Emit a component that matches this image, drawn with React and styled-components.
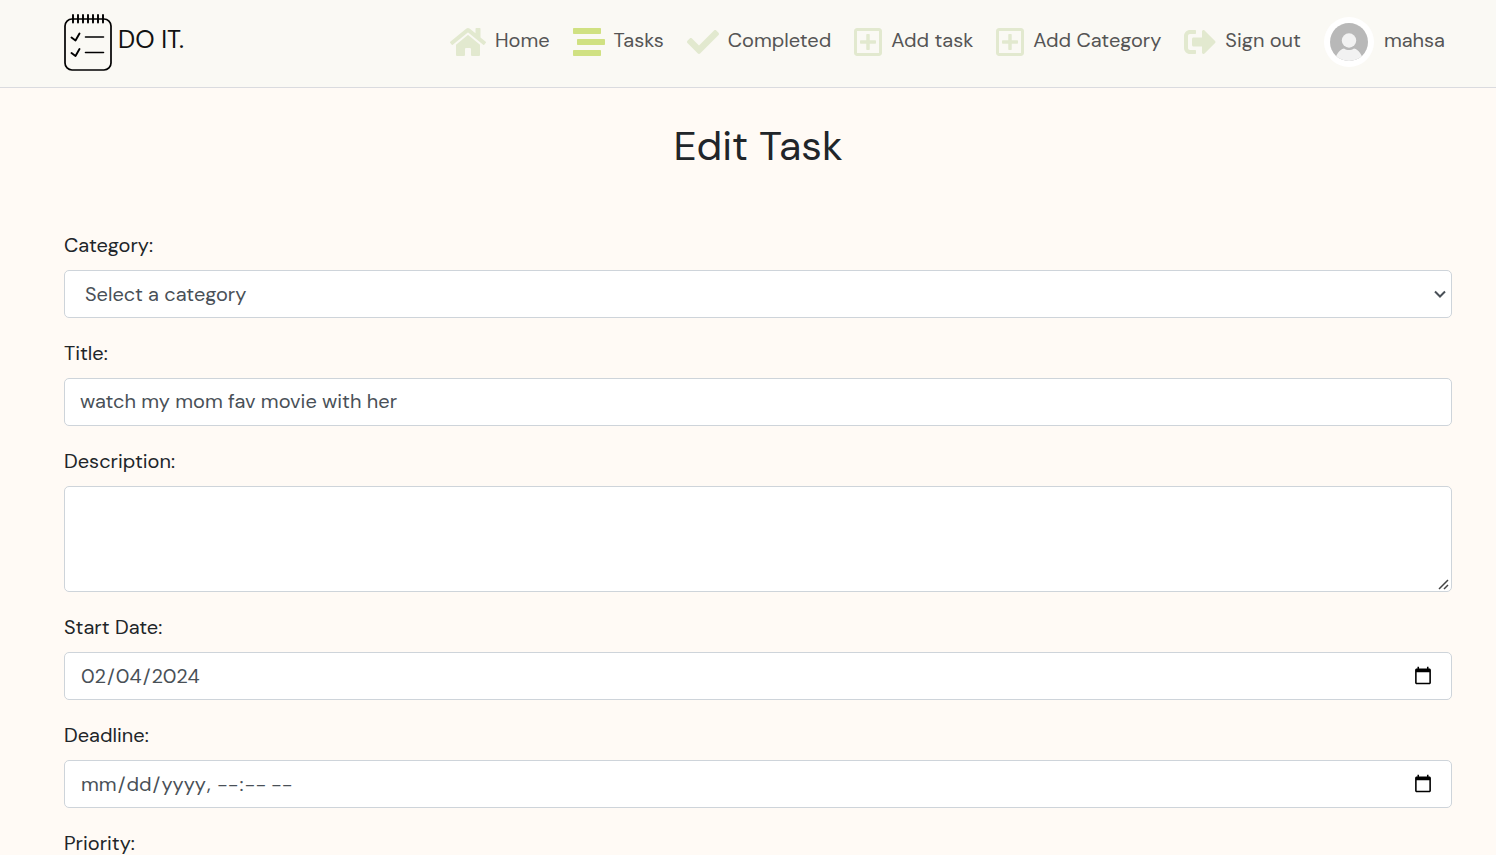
import React from "react";
import styled, { createGlobalStyle } from "styled-components";
import { FaHome, FaStream, FaCheck, FaRegPlusSquare, FaSignOutAlt } from "react-icons/fa";

const GlobalStyle = createGlobalStyle`
  *, *::before, *::after { box-sizing: border-box; }
  body {
    margin: 0;
    background: #fffaf5;
    color: #212529;
    font-family: "DM Sans", Inter, "Liberation Sans", sans-serif;
    font-size: 20px;
    line-height: 30px;
  }
`;

const Header = styled.header`
  display: flex;
  align-items: center;
  justify-content: space-between;
  height: 88px;
  padding: 0 44px 0 64px;
  background: #faf9f4;
  border-bottom: 1px solid #dadbdf;
`;

const Brand = styled.a`
  display: flex;
  align-items: center;
  gap: 6px;
  color: #111;
  font-size: 25px;
  text-decoration: none;
  padding-bottom: 8px;
`;

const BrandMark = styled.svg`
  width: 48px;
  height: 58px;
  margin-top: 6px;
`;

const Nav = styled.nav`
  display: flex;
  align-items: center;
  gap: 23px;
  padding: 0 7px 8px 0;
`;

const NavLink = styled.a`
  display: flex;
  align-items: center;
  gap: 9px;
  color: #555;
  text-decoration: none;
  white-space: nowrap;

  svg {
    flex: none;
    width: ${(p) => p.$iconWidth}px;
    height: 32px;
    margin-top: 5px;
    color: ${(p) => (p.$active ? "#d0e182" : "#e2e9cf")};
  }
`;

const Profile = styled.a`
  display: flex;
  align-items: center;
  gap: 10px;
  color: #555;
  text-decoration: none;
`;

const Avatar = styled.svg`
  width: 50px;
  height: 50px;
  margin-top: 5px;
`;

const Main = styled.main`
  padding: 34px 44px 0 64px;
`;

const Title = styled.h1`
  margin: 0 0 60px;
  font-size: 41px;
  font-weight: 400;
  line-height: 48px;
  text-align: center;
`;

const Form = styled.form`
  display: flex;
  flex-direction: column;
  gap: 20px;
`;

const Field = styled.div`
  display: flex;
  flex-direction: column;
  gap: 10px;
`;

const Input = styled.input`
  width: 100%;
  height: 48px;
  margin: 0;
  padding: 6px 15px 8px;
  border: 1px solid #ced4da;
  border-radius: 5px;
  background: #fff;
  color: #495057;
  font: inherit;
`;

const DateInput = styled(Input)`
  padding: 7px 16px 7px 15px;
`;

const SelectBox = styled.div`
  display: grid;
  align-items: center;

  > * { grid-area: 1 / 1; }

  svg {
    justify-self: end;
    width: 12px;
    height: 8px;
    margin-right: 6px;
    pointer-events: none;
  }
`;

const Select = styled(Input).attrs({ as: "select" })`
  appearance: none;
  padding: 7px 24px 7px 20px;
`;

const TextArea = styled(Input).attrs({ as: "textarea" })`
  display: block;
  height: 106px;
  resize: vertical;

  &::-webkit-resizer {
    background: url("data:image/svg+xml,%3Csvg xmlns='http://www.w3.org/2000/svg' width='15' height='15' fill='none' stroke='%23444' stroke-width='1.5'%3E%3Cpath d='M3 13L12 4M8 13L12 9'/%3E%3C/svg%3E") no-repeat;
  }
`;

const links = [
  { label: "Home", icon: FaHome, width: 36 },
  { label: "Tasks", icon: FaStream, width: 32, active: true },
  { label: "Completed", icon: FaCheck, width: 32 },
  { label: "Add task", icon: FaRegPlusSquare, width: 28 },
  { label: "Add Category", icon: FaRegPlusSquare, width: 28 },
  { label: "Sign out", icon: FaSignOutAlt, width: 32 },
];

function Notepad() {
  return (
    <BrandMark viewBox="0 0 48 58" fill="none" stroke="#000" strokeLinecap="round" strokeLinejoin="round" aria-hidden="true">
      <rect x="1" y="5" width="46" height="51" rx="7" strokeWidth="1.7" />
      <path d="M9 1v7.5M14 1v7.5M19 1v7.5M24 1v7.5M29 1v7.5M34 1v7.5M39 1v7.5" strokeWidth="1.9" />
      <path d="M7.5 23.5l4 3 4-7M7.5 39l4 3 4-7" strokeWidth="1.9" />
      <path d="M21.5 23h18M21.5 38.5h18" strokeWidth="1.6" />
    </BrandMark>
  );
}

function UserPicture() {
  return (
    <Avatar viewBox="0 0 50 50" aria-hidden="true">
      <defs>
        <clipPath id="avatar-disc"><circle cx="25" cy="25" r="19" /></clipPath>
      </defs>
      <circle cx="25" cy="25" r="25" fill="#fff" />
      <g clipPath="url(#avatar-disc)">
        <rect width="50" height="50" fill="#b8b8b8" />
        <circle cx="25" cy="23.5" r="7.2" fill="#f2f2f2" />
        <path d="M10 45c2-7 5-12.5 10-13.5 3 2 7 2 10 0 5 1 8 6.5 10 13.5z" fill="#f2f2f2" />
      </g>
    </Avatar>
  );
}

function Dropdown({ id, children }) {
  return (
    <SelectBox>
      <Select id={id}>{children}</Select>
      <svg viewBox="0 0 12 8" fill="none" stroke="#495057" strokeWidth="2" aria-hidden="true">
        <path d="M1 1.5l5 5 5-5" />
      </svg>
    </SelectBox>
  );
}

export default function App() {
  return (
    <>
      <GlobalStyle />
      <Header>
        <Brand href="#"><Notepad />DO IT.</Brand>
        <Nav>
          {links.map(({ label, icon: Icon, width, active }) => (
            <NavLink key={label} href="#" $iconWidth={width} $active={active}>
              <Icon aria-hidden="true" />{label}
            </NavLink>
          ))}
          <Profile href="#"><UserPicture />mahsa</Profile>
        </Nav>
      </Header>
      <Main>
        <Title>Edit Task</Title>
        <Form>
          <Field>
            <label htmlFor="category">Category:</label>
            <Dropdown id="category"><option>Select a category</option></Dropdown>
          </Field>
          <Field>
            <label htmlFor="title">Title:</label>
            <Input id="title" type="text" defaultValue="watch my mom fav movie with her" />
          </Field>
          <Field>
            <label htmlFor="description">Description:</label>
            <TextArea id="description" />
          </Field>
          <Field>
            <label htmlFor="start">Start Date:</label>
            <DateInput id="start" type="date" defaultValue="2024-02-04" />
          </Field>
          <Field>
            <label htmlFor="deadline">Deadline:</label>
            <DateInput id="deadline" type="datetime-local" />
          </Field>
          <Field>
            <label htmlFor="priority">Priority:</label>
            <Dropdown id="priority" />
          </Field>
        </Form>
      </Main>
    </>
  );
}
